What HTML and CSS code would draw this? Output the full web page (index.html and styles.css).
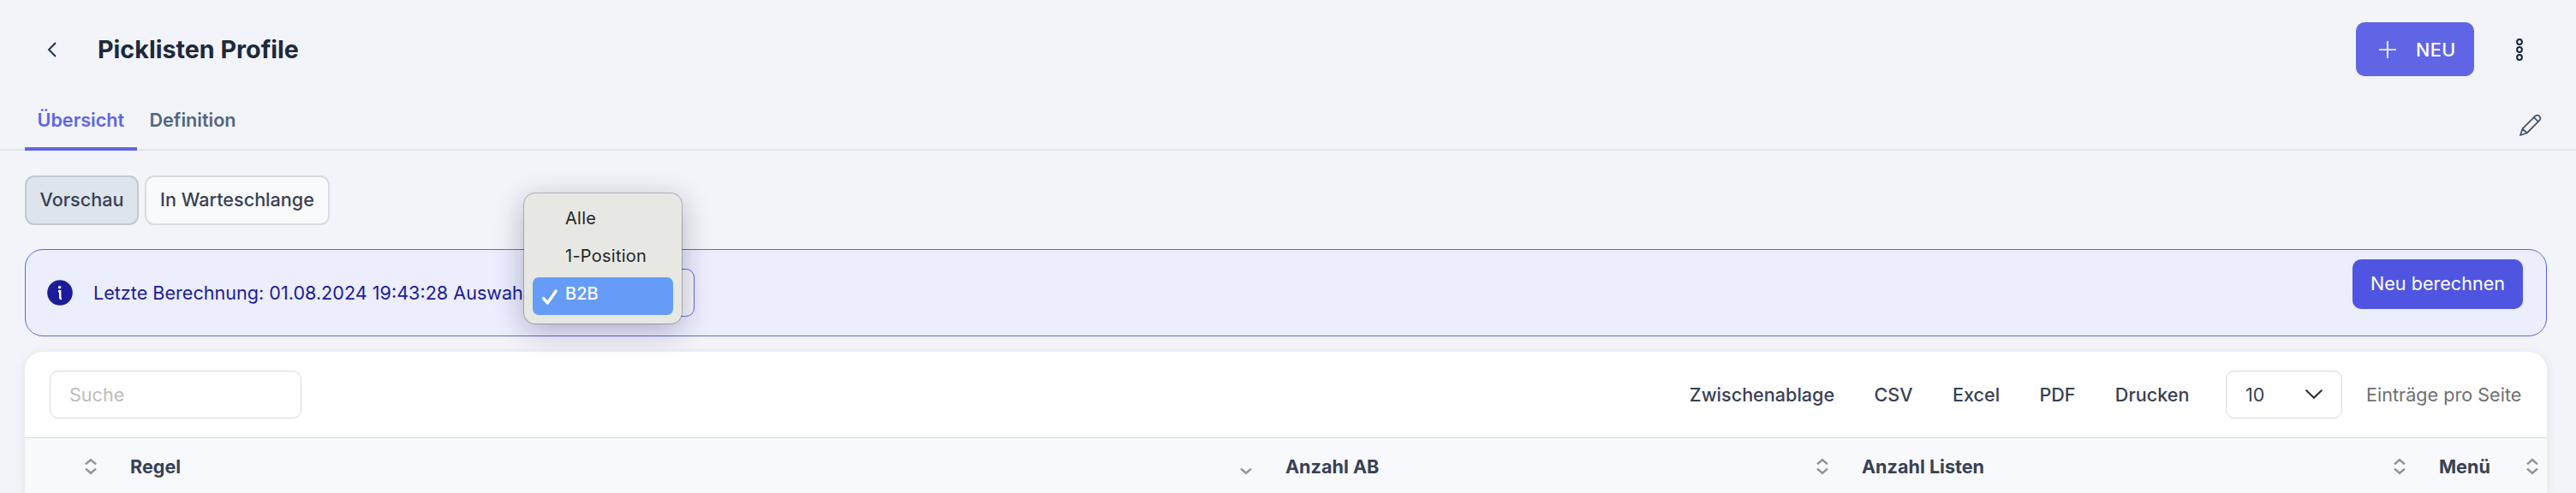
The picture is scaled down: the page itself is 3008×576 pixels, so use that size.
FILE: index.html
```html
<!DOCTYPE html>
<html lang="de">
<head>
<meta charset="utf-8">
<title>Picklisten Profile</title>
<link rel="stylesheet" href="styles.css">
</head>
<body>
<svg class="defs" aria-hidden="true">
  <symbol id="sort" viewBox="0 0 16 20"><path d="M2 7.400 8 2.200l6 5.200M2 12.600 8 17.800l6-5.200"/></symbol>
  <symbol id="sort-down" viewBox="0 0 16 20"><path d="M2 12.600 8 17.800l6-5.200"/></symbol>
</svg>

<header class="header">
  <svg class="back" viewBox="0 0 12 18"><path d="M9.500 1.500 2 9l7.500 7.500"/></svg>
  <h1 class="title">Picklisten Profile</h1>
  <button class="btn-new">
    <svg class="plus" viewBox="0 0 20 20"><path d="M10 .5v19M.5 10h19"/></svg>
    <span>NEU</span>
  </button>
  <svg class="dots" viewBox="0 0 10 26"><circle cx="5" cy="4" r="2.900"/><circle cx="5" cy="13" r="2.900"/><circle cx="5" cy="22" r="2.900"/></svg>
</header>

<nav class="tabs">
  <a class="tab tab-active">Übersicht</a>
  <a class="tab">Definition</a>
  <svg class="pencil" viewBox="0 0 26 26"><path d="M1 25l2.600-7.600L18.300 2.700a4 4 0 0 1 5.100 0 4 4 0 0 1 0 5L8.600 22.500zM3.600 17.400l5 5.100M16.800 4.200l5.100 5"/></svg>
</nav>

<main class="main">
  <div class="switch">
    <button class="pill pill-active">Vorschau</button>
    <button class="pill">In Warteschlange</button>
  </div>

  <section class="alert">
    <svg class="info" viewBox="0 0 30 30"><circle cx="15" cy="15" r="14.800"/><rect x="13" y="7.300" width="3.200" height="2.800"/><path d="M13 13.200h2.200v7.600q0 1.200 1.200 1.200h.6"/></svg>
    <span class="alert-text">Letzte Berechnung: 01.08.2024 19:43:28 Auswahl:</span>
    <div class="select">
      <ul class="menu">
        <li class="option">Alle</li>
        <li class="option">1-Position</li>
        <li class="option option-selected"><svg class="check" viewBox="0 0 20 20"><path d="M2.500 11.500 7.500 17 17.200 3"/></svg>B2B</li>
      </ul>
    </div>
    <button class="btn-recalc">Neu berechnen</button>
  </section>

  <section class="card">
    <div class="toolbar">
      <div class="search">Suche</div>
      <div class="exports">
        <span>Zwischenablage</span><span>CSV</span><span>Excel</span><span>PDF</span><span>Drucken</span>
      </div>
      <div class="page-size">10<svg class="chevron" viewBox="0 0 20 12"><path d="M1.200 1.300 10 9.800l8.800-8.500"/></svg></div>
      <span class="per-page">Einträge pro Seite</span>
    </div>
    <div class="thead">
      <div class="th"><svg class="sort"><use href="#sort"/></svg></div>
      <div class="th">Regel<svg class="sort"><use href="#sort-down"/></svg></div>
      <div class="th">Anzahl AB<svg class="sort"><use href="#sort"/></svg></div>
      <div class="th">Anzahl Listen<svg class="sort"><use href="#sort"/></svg></div>
      <div class="th th-last">Menü<svg class="sort"><use href="#sort"/></svg></div>
    </div>
  </section>
</main>
</body>
</html>
```
FILE: styles.css
```css
* { box-sizing: border-box; }

body {
  margin: 0;
  height: 576px;
  overflow: hidden;
  background: #f3f4f9;
  color: #374155;
  font-family: Inter, "Liberation Sans", sans-serif;
  font-size: 21.6px;
  line-height: 28px;
  white-space: nowrap;
}

button { border: 0; font: inherit; color: inherit; margin: 0; }
svg { flex: none; fill: none; }
.defs { display: none; }

.header {
  display: flex;
  align-items: center;
  height: 115px;
  padding: 0 61px 0 55px;
}
.back { width: 12px; height: 18px; stroke: #1b2a41; stroke-width: 1.8; stroke-linecap: round; }
.title { margin: 0 0 0 47px; font-size: 28.7px; font-weight: 700; line-height: 36px; color: #1e293b; }
.btn-new {
  display: flex;
  align-items: center;
  width: 138px;
  height: 63px;
  margin-left: auto;
  padding: 0 0 0 27px;
  gap: 23px;
  border-radius: 10px;
  background: #6065e6;
  color: #fff;
  font-weight: 500;
  letter-spacing: 0.4px;
}
.plus { width: 20px; height: 20px; stroke: #fff; stroke-width: 1.7; stroke-linecap: round; }
.dots { width: 10px; height: 26px; margin-left: 48px; stroke: #16263f; stroke-width: 2; }

.tabs {
  display: flex;
  height: 61px;
  padding: 0 40px 0 29px;
  border-bottom: 2px solid #dde5ed;
  font-weight: 600;
  color: #52667f;
}
.tab { height: 61px; padding: 10.500px 14px 0 14.500px; }
.tab-active { width: 131px; color: #6065e6; border-bottom: 4px solid #6065e6; }
.pencil { width: 26px; height: 26px; margin: 18px 0 0 auto; stroke: #475569; stroke-width: 1.8; stroke-linejoin: round; }

.main { padding: 29px 34px 0 29px; }
.switch { display: flex; gap: 7px; }
.pill {
  width: 216px;
  height: 58px;
  padding: 0 0 2px;
  border: 2px solid #d9dbde;
  border-radius: 11px;
  background: #f9fafc;
  font-weight: 500;
}
.pill-active { width: 133px; border-color: #c1c9d1; background: #dde4ec; }

.alert {
  display: flex;
  height: 102px;
  margin-top: 28px;
  padding: 0 27px 0 25px;
  align-items: center;
  border: 1px solid #6065e6;
  border-radius: 21px;
  background: #ecedfd;
  color: #1a1c99;
}
.info { width: 30px; height: 30px; }
.info circle { fill: #1a1c99; }
.info rect { fill: #fff; }
.info path { stroke: #fff; stroke-width: 2.400; }
.alert-text { width: 512px; margin-left: 24px; }
.select {
  position: relative;
  width: 190px;
  height: 56px;
  border: 1px solid #6065e6;
  border-radius: 10px;
  background: #f6f7fb;
}
.menu {
  position: absolute;
  left: -10px;
  top: -89px;
  width: 184px;
  height: 152px;
  margin: 0;
  padding: 10px 10px;
  border-radius: 13px;
  background: #e7e8e3;
  box-shadow: 0 0 0 1px rgba(0, 0, 0, .22), 0 8px 34px rgba(20, 20, 60, .3);
  list-style: none;
  color: #262626;
  font-size: 20px;
  letter-spacing: .25px;
}
.option { display: flex; height: 44px; padding: 5px 0 0 38px; }
.option-selected { padding-left: 10px; gap: 8px; border-radius: 7px; background: #669cf8; color: #fff; font-weight: 500; letter-spacing: 0; }
.check { width: 20px; height: 20px; margin-top: 8px; stroke: #fff; stroke-width: 3.400; stroke-linecap: round; stroke-linejoin: round; }
.btn-recalc {
  align-self: flex-start;
  width: 199px;
  height: 58px;
  margin: 11px 0 0 auto;
  padding: 0 0 2px;
  border-radius: 10px;
  background: #4f55e1;
  color: #fff;
}

.card {
  height: 165px;
  margin-top: 18px;
  border-radius: 21px 21px 0 0;
  background: #fff;
  box-shadow: 0 2px 12px rgba(30, 41, 80, .09);
}
.toolbar {
  display: flex;
  align-items: center;
  height: 101px;
  padding: 0 28px 0 29px;
  border-bottom: 1px solid #d9dadc;
}
.search {
  width: 294px;
  height: 56px;
  padding: 13px 22px;
  border: 1px solid #d9d9d9;
  border-radius: 10px;
  color: #bdbdbd;
}
.exports { display: flex; gap: 46.300px; margin: 0 42.500px 0 auto; font-weight: 500; }
.page-size {
  display: flex;
  align-items: center;
  justify-content: space-between;
  width: 136px;
  height: 56px;
  padding: 0 22px;
  border: 1px solid #d9d9d9;
  border-radius: 10px;
}
.chevron { width: 20px; height: 12px; stroke: #2b3036; stroke-width: 2.100; stroke-linecap: round; }
.per-page { width: 183px; margin-left: 28px; color: #707070; }

.thead {
  display: grid;
  grid-template-columns: 101px 1349px 673px 674px 148px;
  height: 64px;
  padding-top: 1px;
  background: #f8f9fd;
  font-weight: 700;
}
.th { display: flex; align-items: center; padding: 0 16px 0 22px; }
.th-last { padding-right: 9px; }
.sort { width: 16px; height: 20px; margin-left: auto; stroke: #949494; stroke-width: 2.500; }
```
